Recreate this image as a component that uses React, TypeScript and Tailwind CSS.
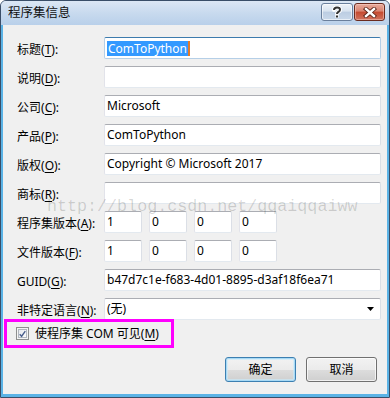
import React from "react";

const inputNormal =
  "h-[22px] flex items-center pl-[2px] bg-white border border-[#e3e9ef] border-t-[#abadb3] border-l-[#e2e3ea] border-r-[#dbdfe6] rounded-[2px] text-[12px] text-black";

function L({ t, k }: { t: string; k: string }) {
  return (
    <span className="text-[12px] text-black leading-none">
      {t}(<span className="underline underline-offset-[2px]">{k}</span>):
    </span>
  );
}

function Row({ label, children }: { label: React.ReactNode; children: React.ReactNode }) {
  return (
    <div className="flex items-center h-[22px]">
      <div className="w-[87px] shrink-0">{label}</div>
      <div className="flex-1">{children}</div>
    </div>
  );
}

function Ver({ v }: { v: string }) {
  return <div className={inputNormal + " w-[38px]"}>{v}</div>;
}

export default function App() {
  return (
    <div className="relative w-[390px] h-[398px] overflow-hidden bg-white font-['Noto_Sans','Noto_Sans_CJK_SC',sans-serif]">
      <div className="w-[390px] h-[398px] flex flex-col rounded-t-[6px] border border-[#3a4e68] bg-[#b9d1ea] overflow-hidden">
        {/* title bar */}
        <div className="h-[24px] shrink-0 flex items-center pl-[7px] pr-[4px] bg-[linear-gradient(#dce7f4,#c8daee_50%,#b9d0ea)]">
          <span className="text-[12.5px] text-[#111] leading-none">程序集信息</span>
          <div className="flex-1" />
          <div className="flex gap-[1px] mt-[-2px]">
            <div className="w-[32px] h-[18px] rounded-[3px] border border-[#6a7f9c] bg-[linear-gradient(#edf2f8,#d8e3f0_45%,#bccde2_50%,#c9d8ea)] flex items-center justify-center shadow-[inset_0_0_0_1px_rgba(255,255,255,0.6)]">
              <svg width="10" height="12" viewBox="0 0 10 12">
                <path d="M2 4 Q2 1.5 5 1.5 Q8 1.5 8 3.8 Q8 5.3 6.3 6 Q5 6.6 5 8" fill="none" stroke="#fff" strokeWidth="4" strokeLinecap="round" />
                <path d="M2 4 Q2 1.5 5 1.5 Q8 1.5 8 3.8 Q8 5.3 6.3 6 Q5 6.6 5 8" fill="none" stroke="#333" strokeWidth="2" />
                <rect x="3.5" y="9" width="3" height="3" fill="#fff" />
                <rect x="4" y="9.5" width="2" height="2" fill="#333" />
              </svg>
            </div>
            <div className="w-[31px] h-[18px] rounded-[3px] border border-[#6b2b1e] bg-[linear-gradient(#e9ab9c,#d98471_45%,#c5492f_50%,#d0735f)] flex items-center justify-center shadow-[inset_0_0_0_1px_rgba(255,220,210,0.45)]">
              <svg width="14" height="11" viewBox="0 0 14 11">
                <path d="M3 2 L11 9 M11 2 L3 9" stroke="#5a2418" strokeWidth="4.2" strokeLinecap="square" />
                <path d="M3 2 L11 9 M11 2 L3 9" stroke="#fff" strokeWidth="2.4" strokeLinecap="square" />
              </svg>
            </div>
          </div>
        </div>
        {/* body */}
        <div className="flex-1 flex bg-[#f0f0f0] border-x-[2px] border-b-[3px] border-[#5bb3e6]">
          <div className="flex-1 flex flex-col pl-[14px] pr-[6px] pt-[12px]">
            <div className="flex flex-col gap-[7px]">
              <Row label={<L t="标题" k="T" />}>
                <div className="h-[22px] flex items-center pl-[2px] bg-white border border-[#b5cfe7] border-t-[#3d7bad] rounded-[2px] text-[12px]">
                  <span className="bg-[#3399ff] text-white leading-[15px] px-[1px]">ComToPython</span>
                  <span className="w-[2px] h-[15px] bg-[#e07a2a]" />
                </div>
              </Row>
              <Row label={<L t="说明" k="D" />}>
                <div className={inputNormal}></div>
              </Row>
              <Row label={<L t="公司" k="C" />}>
                <div className={inputNormal}>Microsoft</div>
              </Row>
              <Row label={<L t="产品" k="P" />}>
                <div className={inputNormal}>ComToPython</div>
              </Row>
              <Row label={<L t="版权" k="O" />}>
                <div className={inputNormal}>Copyright © Microsoft 2017</div>
              </Row>
              <Row label={<L t="商标" k="R" />}>
                <div className={inputNormal}></div>
              </Row>
              <Row label={<L t="程序集版本" k="A" />}>
                <div className="flex gap-[7px]">
                  <Ver v="1" />
                  <Ver v="0" />
                  <Ver v="0" />
                  <Ver v="0" />
                </div>
              </Row>
              <Row label={<L t="文件版本" k="F" />}>
                <div className="flex gap-[7px]">
                  <Ver v="1" />
                  <Ver v="0" />
                  <Ver v="0" />
                  <Ver v="0" />
                </div>
              </Row>
              <Row label={<L t="GUID" k="G" />}>
                <div className={inputNormal}>b47d7c1e-f683-4d01-8895-d3af18f6ea71</div>
              </Row>
              <Row label={<L t="非特定语言" k="N" />}>
                <div className={inputNormal + " justify-between pr-[6px]"}>
                  <span>(无)</span>
                  <svg width="7" height="4" viewBox="0 0 7 4">
                    <path d="M0 0 H7 L3.5 4 Z" fill="#000" />
                  </svg>
                </div>
              </Row>
            </div>
            {/* checkbox row with magenta annotation */}
            <div className="mt-[-1px] ml-[-13px] w-[170px] h-[29px] border-[3px] border-[#ff00ff] flex items-center pl-[9px] gap-[6px]">
              <div className="w-[13px] h-[13px] border border-[#8e8f8f] bg-[#f4f4f4] p-[1px]">
                <div className="w-full h-full border border-[#b2b7bf] bg-[linear-gradient(135deg,#e6e9ee,#fbfbfb)] flex items-center justify-center">
                  <svg width="8" height="8" viewBox="0 0 8 8">
                    <path d="M0.8 4.2 L3 6.6 L7.2 0.8" fill="none" stroke="#4a5f8d" strokeWidth="1.6" />
                  </svg>
                </div>
              </div>
              <span className="text-[12px] text-black leading-none">
                使程序集 COM 可见(<span className="underline underline-offset-[2px]">M</span>)
              </span>
            </div>
            <div className="flex justify-end gap-[10px] mt-[9px] pr-[4px]">
              <div className="w-[71px] h-[25px] rounded-[3px] border border-[#3c7fb1] bg-[linear-gradient(#f2f2f2,#ebebeb_50%,#dddddd_50%,#cfcfcf)] shadow-[inset_0_0_0_1px_#a7d9f5,inset_0_0_0_2px_rgba(200,235,252,0.6)] flex items-center justify-center text-[12px] text-black">
                确定
              </div>
              <div className="w-[71px] h-[25px] rounded-[3px] border border-[#707070] bg-[linear-gradient(#f2f2f2,#ebebeb_50%,#dddddd_50%,#cfcfcf)] shadow-[inset_0_0_0_1px_rgba(255,255,255,0.7)] flex items-center justify-center text-[12px] text-black">
                取消
              </div>
            </div>
          </div>
        </div>
      </div>
      {/* watermark overlay */}
      <div className="absolute left-[47px] top-[197px] font-['Liberation_Mono',monospace] text-[16.7px] leading-[20px] text-[rgba(0,0,0,0.16)] pointer-events-none whitespace-nowrap">
        http://blog.csdn.net/qqaiqqaiww
      </div>
    </div>
  );
}
